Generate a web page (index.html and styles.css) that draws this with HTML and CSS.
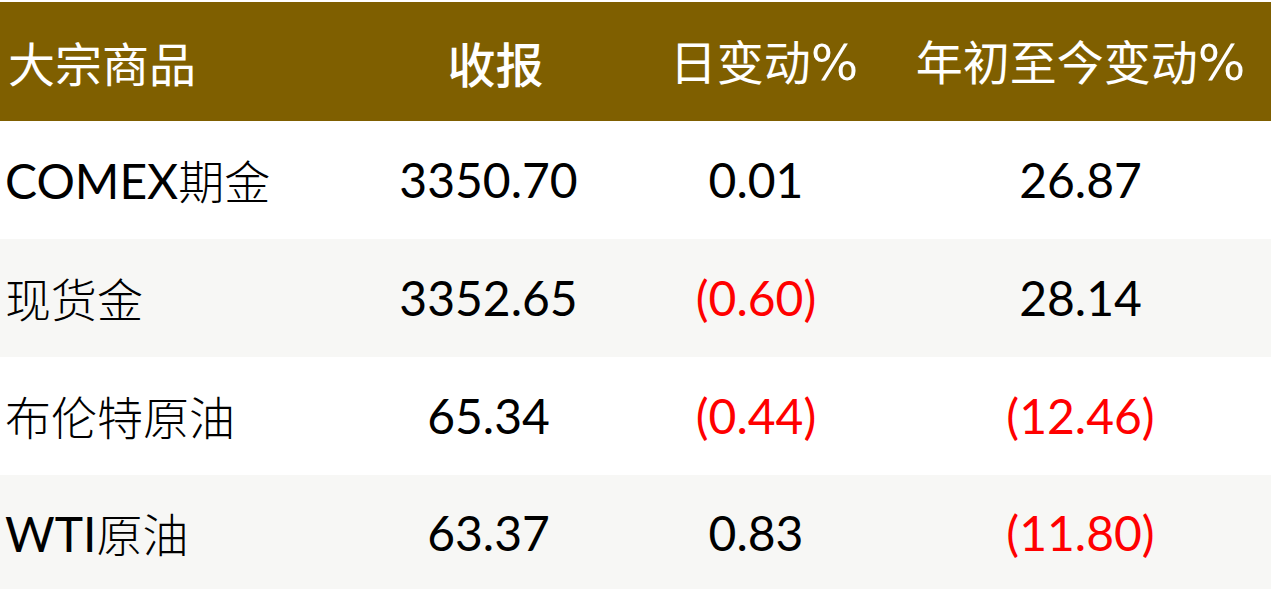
FILE: index.html
```html
<!DOCTYPE html>
<html lang="zh-CN">
<head>
<meta charset="utf-8">
<title>大宗商品</title>
<link rel="stylesheet" href="styles.css">
</head>
<body>
<div class="table">
  <div class="row head">
    <div class="cell name">大宗商品</div>
    <div class="cell strong">收报</div>
    <div class="cell shift">日变动<span class="pct">%</span></div>
    <div class="cell">年初至今变动<span class="pct">%</span></div>
  </div>
  <div class="row">
    <div class="cell name">COMEX<span class="cjk">期金</span></div>
    <div class="cell">3350.70</div>
    <div class="cell">0.01</div>
    <div class="cell">26.87</div>
  </div>
  <div class="row alt">
    <div class="cell name"><span class="cjk">现货金</span></div>
    <div class="cell">3352.65</div>
    <div class="cell neg">(0.60)</div>
    <div class="cell">28.14</div>
  </div>
  <div class="row">
    <div class="cell name"><span class="cjk">布伦特原油</span></div>
    <div class="cell">65.34</div>
    <div class="cell neg">(0.44)</div>
    <div class="cell neg">(12.46)</div>
  </div>
  <div class="row alt last">
    <div class="cell name">WTI<span class="cjk">原油</span></div>
    <div class="cell">63.37</div>
    <div class="cell">0.83</div>
    <div class="cell neg">(11.80)</div>
  </div>
</div>
</body>
</html>
```
FILE: styles.css
```css
html, body {
  margin: 0;
  padding: 0;
  background: #ffffff;
}
body {
  width: 1271px;
  height: 589px;
  overflow: hidden;
  padding-top: 2px;
  box-sizing: border-box;
}
.table {
  display: flex;
  flex-direction: column;
  font-family: Lato, "Noto Sans CJK SC", sans-serif;
  font-weight: 400;
  color: #000000;
}
.row {
  display: grid;
  grid-template-columns: 355px 267px 268px 1fr;
  height: 118px;
  align-items: center;
  font-size: 48px;
}
.row.alt {
  background: #f7f7f5;
}
.row.last {
  height: 116px;
}
.head {
  background: #7f5f00;
  color: #ffffff;
  height: 119px;
  font-family: "Noto Sans CJK SC", sans-serif;
  font-weight: 400;
  font-size: 47px;
}
.head .cell.strong {
  font-size: 48px;
  font-weight: 500;
  padding-left: 14px;
}
.head .cell.shift {
  padding-left: 16px;
}
.pct {
  font-family: "DejaVu Sans", sans-serif;
  font-size: 50px;
}
.cell {
  text-align: center;
  white-space: nowrap;
  line-height: 1;
}
.cell.name {
  text-align: left;
  padding-left: 5px;
}
.head .cell.name {
  padding-left: 8px;
}
.cjk {
  font-family: "Noto Sans CJK SC", sans-serif;
  font-weight: 300;
  font-size: 46px;
}
.neg {
  color: #ff0000;
}
```
